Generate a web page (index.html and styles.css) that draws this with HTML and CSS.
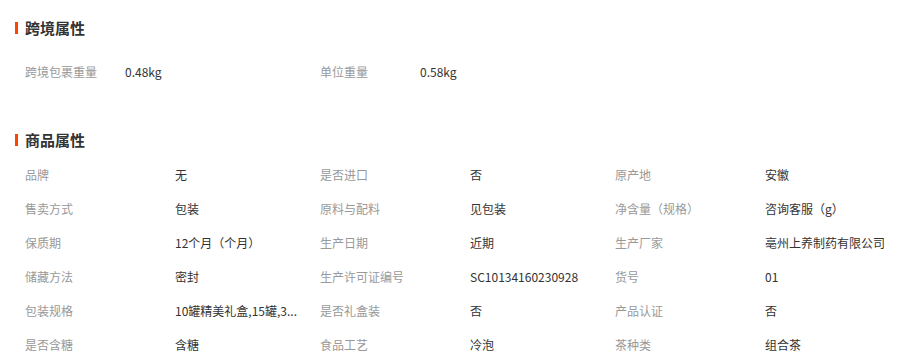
FILE: index.html
```html
<!DOCTYPE html>
<html lang="zh">
<head>
<meta charset="utf-8">
<link rel="stylesheet" href="styles.css">
</head>
<body>
<div class="page">
  <section class="block block-cross">
    <h2 class="title">跨境属性</h2>
    <div class="grid grid-two">
      <div class="item"><span class="label short">跨境包裹重量</span><span class="value">0.48kg</span></div>
      <div class="item"><span class="label short">单位重量</span><span class="value">0.58kg</span></div>
    </div>
  </section>
  <section class="block block-goods">
    <h2 class="title">商品属性</h2>
    <div class="grid grid-three">
      <div class="item"><span class="label">品牌</span><span class="value">无</span></div>
      <div class="item"><span class="label">是否进口</span><span class="value">否</span></div>
      <div class="item"><span class="label">原产地</span><span class="value">安徽</span></div>
      <div class="item"><span class="label">售卖方式</span><span class="value">包装</span></div>
      <div class="item"><span class="label">原料与配料</span><span class="value">见包装</span></div>
      <div class="item"><span class="label">净含量（规格）</span><span class="value">咨询客服（g）</span></div>
      <div class="item"><span class="label">保质期</span><span class="value">12个月（个月）</span></div>
      <div class="item"><span class="label">生产日期</span><span class="value">近期</span></div>
      <div class="item"><span class="label">生产厂家</span><span class="value">亳州上养制药有限公司</span></div>
      <div class="item"><span class="label">储藏方法</span><span class="value">密封</span></div>
      <div class="item"><span class="label">生产许可证编号</span><span class="value">SC10134160230928</span></div>
      <div class="item"><span class="label">货号</span><span class="value">01</span></div>
      <div class="item"><span class="label">包装规格</span><span class="value">10罐精美礼盒,15罐,3...</span></div>
      <div class="item"><span class="label">是否礼盒装</span><span class="value">否</span></div>
      <div class="item"><span class="label">产品认证</span><span class="value">否</span></div>
      <div class="item"><span class="label">是否含糖</span><span class="value">含糖</span></div>
      <div class="item"><span class="label">食品工艺</span><span class="value">冷泡</span></div>
      <div class="item"><span class="label">茶种类</span><span class="value">组合茶</span></div>
    </div>
  </section>
</div>
</body>
</html>
```
FILE: styles.css
```css
* { box-sizing: border-box; }
html, body { margin: 0; padding: 0; background: #fff; }
body {
  font-family: "Noto Sans CJK SC", "Noto Sans", sans-serif;
  font-size: 12px;
  color: #333;
}
.page { padding: 18px 0 0 15px; }
.title {
  margin: 0;
  display: flex;
  align-items: center;
  gap: 7px;
  height: 20px;
  font-size: 15px;
  font-weight: bold;
  color: #333;
  line-height: 20px;
}
.title::before {
  content: "";
  display: block;
  width: 3px;
  height: 12px;
  background: #ff4400;
}
.block-cross .grid { margin-top: 16px; }
.block-goods { margin-top: 42px; }
.block-goods .grid { margin-top: 7px; }
.grid {
  display: grid;
  padding-left: 10px;
}
.grid-two { grid-template-columns: 295px 295px; }
.grid-three { grid-template-columns: 295px 295px 295px; }
.item {
  display: flex;
  align-items: center;
  height: 34px;
  white-space: nowrap;
}
.label {
  width: 150px;
  flex: none;
  color: #999;
}
.label.short { width: 100px; }
.value { color: #333; }
```
